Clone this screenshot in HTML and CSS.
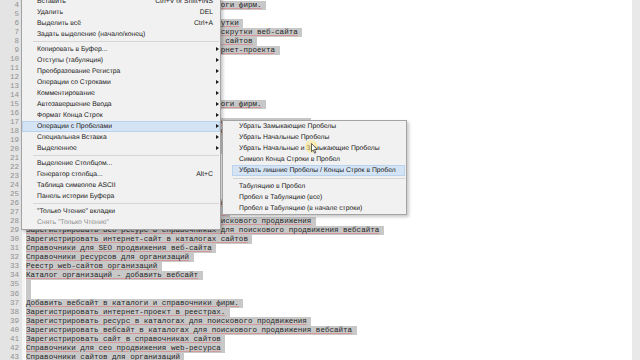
FILE: index.html
```html
<!DOCTYPE html>
<html lang="ru">
<head>
<meta charset="utf-8">
<title>Notepad++</title>
<link rel="stylesheet" href="styles.css">
</head>
<body>
<div class="app">
  <div class="editor">
    <div class="lines">
      <div class="ln"><span class="num">4</span><span class="t">Зарегистрировать сайт в справочники и каталоги фирм.</span></div>
      <div class="ln"><span class="num">5</span><span class="t">Добавить сайт в каталоги</span></div>
      <div class="ln"><span class="num">6</span><span class="t">Зарегистрировать сайт в каталогах для раскрутки</span></div>
      <div class="ln"><span class="num">7</span><span class="t">Зарегистрировать сайт в справочниках для раскрутки веб-сайта</span></div>
      <div class="ln"><span class="num">8</span><span class="t">Зарегистрировать интернет-ресурс в каталоги сайтов</span></div>
      <div class="ln"><span class="num">9</span><span class="t">Справочники web-сайтов для продвижения интернет-проекта</span></div>
      <div class="ln"><span class="num">10</span><span class="t">Каталоги сайтов для организаций</span></div>
      <div class="ln"><span class="num">11</span><span class="t">Реестр интернет-ресурсов</span></div>
      <div class="ln"><span class="num">12</span><span class="t">Каталог сайтов - добавить ресурс</span></div>
      <div class="ln"><span class="num">13</span><span class="t"></span></div>
      <div class="ln"><span class="num">14</span><span class="t"></span></div>
      <div class="ln"><span class="num">15</span><span class="t">Зарегистрировать сайт в справочники и каталоги фирм.</span></div>
      <div class="ln"><span class="num">16</span><span class="t">Добавить сайт в каталоги</span></div>
      <div class="ln"><span class="num">17</span><span class="t">Зарегистрировать ресурс в каталогах для поискового продвижения</span></div>
      <div class="ln"><span class="num">18</span><span class="t">Зарегистрировать вебсайт в каталогах для поискового продвижения вебсайта</span></div>
      <div class="ln"><span class="num">19</span><span class="t">Зарегистрировать сайт в справочниках сайтов</span></div>
      <div class="ln"><span class="num">20</span><span class="t">Справочники для сео продвижения web-ресурса</span></div>
      <div class="ln"><span class="num">21</span><span class="t">Справочники сайтов для организаций</span></div>
      <div class="ln"><span class="num">22</span><span class="t">Реестр web-сайтов организаций</span></div>
      <div class="ln"><span class="num">23</span><span class="t">Каталог организаций - добавить вебсайт</span></div>
      <div class="ln"><span class="num">24</span><span class="t"></span></div>
      <div class="ln"><span class="num">25</span><span class="t"></span></div>
      <div class="ln"><span class="num">26</span><span class="t">Добавить вебсайт в каталоги и справочники фирм.</span></div>
      <div class="ln"><span class="num">27</span><span class="t">Зарегистрировать интернет-проект в реестрах.</span></div>
      <div class="ln"><span class="num">28</span><span class="t">Зарегистрировать сайт в справочниках для поискового продвижения</span></div>
      <div class="ln"><span class="num">29</span><span class="t">Зарегистрировать веб ресурс в справочниках для поискового продвижения вебсайта</span></div>
      <div class="ln"><span class="num">30</span><span class="t">Зарегистрировать интернет-сайт в каталогах сайтов</span></div>
      <div class="ln"><span class="num">31</span><span class="t">Справочники для SEO продвижения веб-сайта</span></div>
      <div class="ln"><span class="num">32</span><span class="t">Справочники ресурсов для организаций</span></div>
      <div class="ln"><span class="num">33</span><span class="t">Реестр web-сайтов организаций</span></div>
      <div class="ln"><span class="num">34</span><span class="t">Каталог организаций - добавить вебсайт</span></div>
      <div class="ln"><span class="num">35</span><span class="t"></span></div>
      <div class="ln"><span class="num">36</span><span class="t"></span></div>
      <div class="ln"><span class="num">37</span><span class="t">Добавить вебсайт в каталоги и справочники фирм.</span></div>
      <div class="ln"><span class="num">38</span><span class="t">Зарегистрировать интернет-проект в реестрах.</span></div>
      <div class="ln"><span class="num">39</span><span class="t">Зарегистрировать ресурс в каталогах для поискового продвижения</span></div>
      <div class="ln"><span class="num">40</span><span class="t">Зарегистрировать вебсайт в каталогах для поискового продвижения вебсайта</span></div>
      <div class="ln"><span class="num">41</span><span class="t">Зарегистрировать сайт в справочниках сайтов</span></div>
      <div class="ln"><span class="num">42</span><span class="t">Справочники для сео продвижения web-ресурса</span></div>
      <div class="ln"><span class="num">43</span><span class="t">Справочники сайтов для организаций</span></div>
    </div>
  </div>
  <div class="vscroll"></div>

  <div class="menu main">
    <div class="item"><span class="label">Вставить</span><span class="key">Ctrl+V or Shift+INS</span><span class="arr"></span></div>
    <div class="item"><span class="label">Удалить</span><span class="key">DEL</span><span class="arr"></span></div>
    <div class="item"><span class="label">Выделить всё</span><span class="key">Ctrl+A</span><span class="arr"></span></div>
    <div class="item"><span class="label">Задать выделение (начало/конец)</span><span class="arr"></span></div>
    <div class="sep"></div>
    <div class="item"><span class="label">Копировать в Буфер...</span><span class="arr on"></span></div>
    <div class="item"><span class="label">Отступы (табуляция)</span><span class="arr on"></span></div>
    <div class="item"><span class="label">Преобразование Регистра</span><span class="arr on"></span></div>
    <div class="item"><span class="label">Операции со Строками</span><span class="arr on"></span></div>
    <div class="item"><span class="label">Комментирование</span><span class="arr on"></span></div>
    <div class="item"><span class="label">Автозавершение Ввода</span><span class="arr on"></span></div>
    <div class="item"><span class="label">Формат Конца Строк</span><span class="arr on"></span></div>
    <div class="item hl"><span class="label">Операции с Пробелами</span><span class="arr on"></span></div>
    <div class="item"><span class="label">Специальная Вставка</span><span class="arr on"></span></div>
    <div class="item"><span class="label">Выделенное</span><span class="arr on"></span></div>
    <div class="sep"></div>
    <div class="item"><span class="label">Выделение Столбцом...</span><span class="arr"></span></div>
    <div class="item"><span class="label">Генератор столбца...</span><span class="key">Alt+C</span><span class="arr"></span></div>
    <div class="item"><span class="label">Таблица символов ASCII</span><span class="arr"></span></div>
    <div class="item"><span class="label">Панель истории Буфера</span><span class="arr"></span></div>
    <div class="sep"></div>
    <div class="item"><span class="label">"Только Чтение" вкладки</span><span class="arr"></span></div>
    <div class="item dis"><span class="label">Снять "Только Чтение"</span><span class="arr"></span></div>
  </div>

  <div class="menu submenu">
    <div class="item"><span class="label">Убрать Замыкающие Пробелы</span></div>
    <div class="item"><span class="label">Убрать Начальные Пробелы</span></div>
    <div class="item"><span class="label">Убрать Начальные и Замыкающие Пробелы</span></div>
    <div class="item"><span class="label">Символ Конца Строки в Пробел</span></div>
    <div class="item hl"><span class="label">Убрать лишние Пробелы / Концы Строк в Пробел</span></div>
    <div class="sep"></div>
    <div class="item"><span class="label">Табуляцию в Пробел</span></div>
    <div class="item"><span class="label">Пробел в Табуляцию (все)</span></div>
    <div class="item"><span class="label">Пробел в Табуляцию (в начале строки)</span></div>
  </div>

  <div class="glow"></div>
  <svg class="pointer" width="7" height="11" viewBox="0 0 7 11">
    <path d="M0.5 0.5 L0.5 8.6 L2.3 6.9 L3.6 10.2 L4.8 9.7 L3.5 6.5 L6.2 6.5 Z" fill="#ffffff" stroke="#222" stroke-width="0.7" stroke-linejoin="round"/>
  </svg>
</div>
</body>
</html>
```

FILE: styles.css
```css
* { box-sizing: border-box; }

html, body {
  margin: 0;
  padding: 0;
}

body {
  width: 640px;
  height: 360px;
  overflow: hidden;
  background: #ffffff;
}

.app {
  position: relative;
  display: flex;
  width: 640px;
  height: 360px;
  overflow: hidden;
}

.editor {
  flex: 1;
  overflow: hidden;
  background: linear-gradient(to right, #e4e4e4 0, #e4e4e4 22px, #f5f5f5 22px, #f5f5f5 25px, #ffffff 25px);
}

.lines {
  padding-top: 1px;
}

.ln {
  display: flex;
  height: 9.03px;
  line-height: 9.03px;
  font-family: "Liberation Mono", "DejaVu Sans Mono", monospace;
  font-size: 7.55px;
  white-space: pre;
}

.num {
  flex: none;
  width: 22px;
  padding-right: 3px;
  text-align: right;
  color: #909090;
}

.t {
  margin-left: 4px;
  padding-right: 4.5px;
  background: #c8c8c8;
  color: #262626;
  text-decoration: underline solid rgba(225, 95, 95, 0.45);
  text-decoration-thickness: 1px;
  text-underline-offset: 1px;
}

.vscroll {
  flex: none;
  width: 8px;
  background: #e9e9e9;
}

.menu {
  position: absolute;
  background: #f1f1f1;
  border: 1px solid #a3a3a3;
  box-shadow: 2px 2px 3px rgba(0, 0, 0, 0.22);
  font-family: "Liberation Sans", Arial, sans-serif;
  font-size: 6.8px;
  text-rendering: geometricPrecision;
  color: #1a1a1a;
}

.main {
  left: 21px;
  top: -5.5px;
  width: 200px;
  padding-bottom: 1px;
}

.item {
  display: flex;
  align-items: center;
  height: 11px;
  padding-left: 15px;
  white-space: nowrap;
}

.item .label {
  flex: 1;
}

.item .arr {
  flex: none;
  width: 7px;
  height: 11px;
  display: flex;
  align-items: center;
  padding-left: 3px;
}

.item .arr.on::before {
  content: "";
  border-left: 3px solid #1a1a1a;
  border-top: 2px solid transparent;
  border-bottom: 2px solid transparent;
}

.item.hl {
  background: #d5e4f5;
  box-shadow: inset 0 0 0 1px #b9d3ef;
}

.item.dis {
  color: #8c8c8c;
}

.sep {
  height: 4px;
  display: flex;
  align-items: center;
  padding-left: 11px;
  padding-right: 1px;
}

.sep::before {
  content: "";
  flex: 1;
  height: 1px;
  background: #d6d6d6;
}

.submenu {
  left: 222px;
  top: 119.5px;
  width: 185px;
}

.submenu .item {
  margin-left: 9px;
  margin-right: 1px;
  padding-left: 7px;
}

.submenu .sep {
  height: 5px;
  padding-left: 10px;
}

.glow {
  position: absolute;
  left: 305px;
  top: 140px;
  width: 13px;
  height: 13px;
  border-radius: 50%;
  background: rgba(255, 232, 120, 0.5);
}

.pointer {
  position: absolute;
  left: 311px;
  top: 143px;
}
```
